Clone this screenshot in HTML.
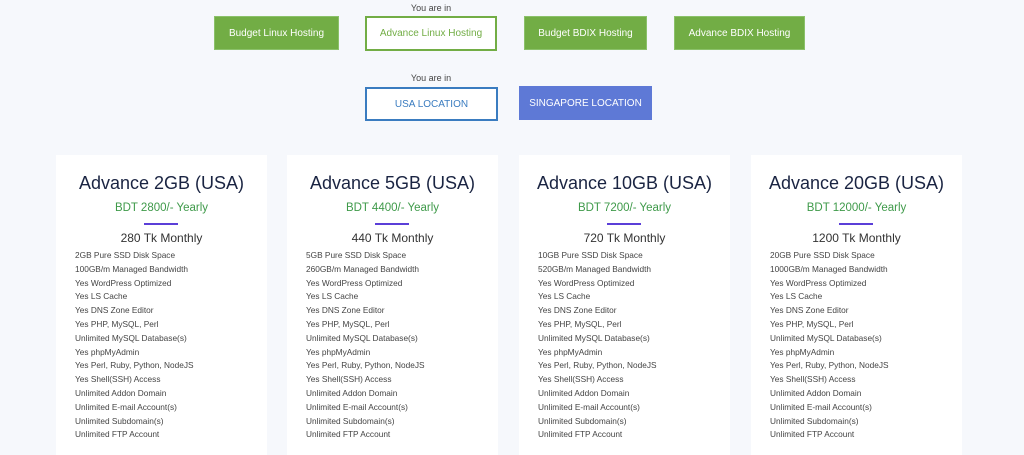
<!DOCTYPE html>
<html><head><style>
body{margin:0;width:1024px;height:436px;background:#f6f8fc;font-family:"Liberation Sans",sans-serif;position:relative;overflow:hidden}
.a{position:absolute;box-sizing:border-box;display:flex;align-items:center;justify-content:center;font-size:10px}
.g{background:#72ad45;color:#fff;border:1px solid #8bc16a}
.o{background:#fff;color:#72ad45;border:2px solid #72ad45}
.u{background:#fff;color:#3a7cc0;border:2px solid #3a7cc0}
.s{background:#5e79d6;color:#fff}
.y{position:absolute;font-size:9px;color:#444;width:132px;text-align:center}
.c{position:absolute;top:155px;width:211px;height:300px;background:#fff}
.c h2{margin:0;position:absolute;top:18px;width:100%;text-align:center;font-weight:normal;font-size:18px;color:#1a2442}
.c .p{position:absolute;top:47px;width:100%;text-align:center;font-size:11.5px;color:#3f9a4a}
.c .l{position:absolute;top:68px;left:88px;width:34px;height:2px;background:#5b3fd8}
.c .m{position:absolute;top:76px;width:100%;text-align:center;font-size:12px;color:#333}
.c ul{position:absolute;top:94px;left:19px;margin:0;padding:0;list-style:none;font-size:8.3px;color:#444;line-height:13.8px}
</style></head><body>
<div class="y" style="left:365px;top:3px">You are in</div>
<div class="a g" style="left:214px;top:16px;width:125px;height:34px">Budget Linux Hosting</div>
<div class="a o" style="left:365px;top:16px;width:132px;height:35px">Advance Linux Hosting</div>
<div class="a g" style="left:524px;top:16px;width:123px;height:34px">Budget BDIX Hosting</div>
<div class="a g" style="left:674px;top:16px;width:131px;height:34px">Advance BDIX Hosting</div>
<div class="y" style="left:365px;top:73px">You are in</div>
<div class="a u" style="left:365px;top:87px;width:133px;height:34px">USA LOCATION</div>
<div class="a s" style="left:519px;top:86px;width:133px;height:34px">SINGAPORE LOCATION</div>
<div class="c" style="left:56px"><h2>Advance 2GB (USA)</h2><div class="p">BDT 2800/- Yearly</div><div class="l"></div><div class="m">280 Tk Monthly</div><ul><li>2GB Pure SSD Disk Space</li><li>100GB/m Managed Bandwidth</li><li>Yes WordPress Optimized</li><li>Yes LS Cache</li><li>Yes DNS Zone Editor</li><li>Yes PHP, MySQL, Perl</li><li>Unlimited MySQL Database(s)</li><li>Yes phpMyAdmin</li><li>Yes Perl, Ruby, Python, NodeJS</li><li>Yes Shell(SSH) Access</li><li>Unlimited Addon Domain</li><li>Unlimited E-mail Account(s)</li><li>Unlimited Subdomain(s)</li><li>Unlimited FTP Account</li></ul></div>
<div class="c" style="left:287px"><h2>Advance 5GB (USA)</h2><div class="p">BDT 4400/- Yearly</div><div class="l"></div><div class="m">440 Tk Monthly</div><ul><li>5GB Pure SSD Disk Space</li><li>260GB/m Managed Bandwidth</li><li>Yes WordPress Optimized</li><li>Yes LS Cache</li><li>Yes DNS Zone Editor</li><li>Yes PHP, MySQL, Perl</li><li>Unlimited MySQL Database(s)</li><li>Yes phpMyAdmin</li><li>Yes Perl, Ruby, Python, NodeJS</li><li>Yes Shell(SSH) Access</li><li>Unlimited Addon Domain</li><li>Unlimited E-mail Account(s)</li><li>Unlimited Subdomain(s)</li><li>Unlimited FTP Account</li></ul></div>
<div class="c" style="left:519px"><h2>Advance 10GB (USA)</h2><div class="p">BDT 7200/- Yearly</div><div class="l"></div><div class="m">720 Tk Monthly</div><ul><li>10GB Pure SSD Disk Space</li><li>520GB/m Managed Bandwidth</li><li>Yes WordPress Optimized</li><li>Yes LS Cache</li><li>Yes DNS Zone Editor</li><li>Yes PHP, MySQL, Perl</li><li>Unlimited MySQL Database(s)</li><li>Yes phpMyAdmin</li><li>Yes Perl, Ruby, Python, NodeJS</li><li>Yes Shell(SSH) Access</li><li>Unlimited Addon Domain</li><li>Unlimited E-mail Account(s)</li><li>Unlimited Subdomain(s)</li><li>Unlimited FTP Account</li></ul></div>
<div class="c" style="left:751px"><h2>Advance 20GB (USA)</h2><div class="p">BDT 12000/- Yearly</div><div class="l"></div><div class="m">1200 Tk Monthly</div><ul><li>20GB Pure SSD Disk Space</li><li>1000GB/m Managed Bandwidth</li><li>Yes WordPress Optimized</li><li>Yes LS Cache</li><li>Yes DNS Zone Editor</li><li>Yes PHP, MySQL, Perl</li><li>Unlimited MySQL Database(s)</li><li>Yes phpMyAdmin</li><li>Yes Perl, Ruby, Python, NodeJS</li><li>Yes Shell(SSH) Access</li><li>Unlimited Addon Domain</li><li>Unlimited E-mail Account(s)</li><li>Unlimited Subdomain(s)</li><li>Unlimited FTP Account</li></ul></div>
</body></html>
